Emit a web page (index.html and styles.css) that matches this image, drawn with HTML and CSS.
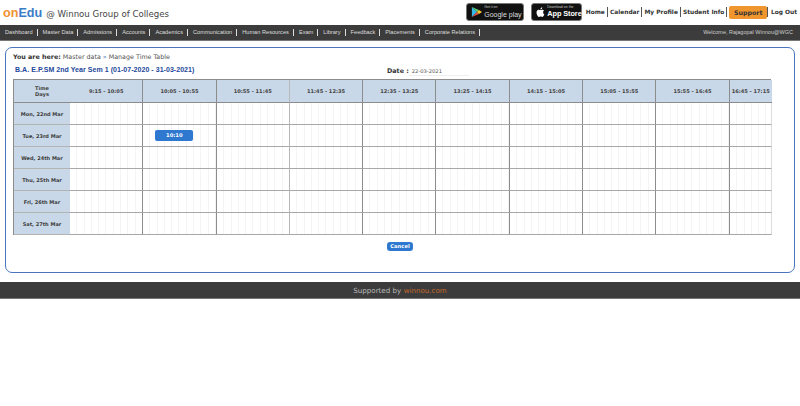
FILE: index.html
```html
<!DOCTYPE html>
<html lang="en">
<head>
<meta charset="utf-8">
<title>onEdu - Manage Time Table</title>
<link rel="stylesheet" href="styles.css">
</head>
<body>
<header class="top">
  <div class="brand"><span class="on">on</span><span class="edu">Edu</span><span class="at">@ Winnou Group of Colleges</span></div>
  <div class="top-right">
    <div class="badge play">
      <svg class="badge-icon" width="11" height="12" viewBox="0 0 13 14"><path d="M1 1v12l6-6z" fill="#35b8e8"/><path d="M1 1l6 6 2.4-2.4z" fill="#5fce7a"/><path d="M1 13l6-6 2.4 2.4z" fill="#e8504a"/><path d="M9.4 4.6L7 7l2.4 2.4L13 7z" fill="#f7c52e"/></svg>
      <div class="badge-text"><span class="small">Get it on</span><span class="big">Google play</span></div>
    </div>
    <div class="badge store">
      <svg class="badge-icon" width="10" height="12" viewBox="0 0 12 14"><path d="M9.700 7.400c0-1.400 1.100-2 1.200-2.100-.7-1-1.700-1.100-2.100-1.100-.9-.1-1.700.5-2.200.5s-1.100-.5-1.900-.5C3.700 4.200 2.800 4.800 2.300 5.600c-1 1.800-.3 4.400.7 5.800.5.700 1.100 1.500 1.800 1.500s1-.5 1.900-.5 1.100.5 1.900.5 1.300-.7 1.800-1.400c.6-.8.800-1.600.8-1.600s-1.500-.6-1.500-2.500zM8.200 3.100c.4-.5.7-1.200.6-1.900-.6 0-1.300.4-1.700.9-.4.4-.7 1.100-.6 1.800.7 0 1.300-.3 1.700-.8z" fill="#fff"/></svg>
      <div class="badge-text"><span class="small">Download on the</span><span class="big strong">App Store</span></div>
    </div>
    <nav class="links">
      <a class="link">Home</a><a class="link">Calendar</a><a class="link">My Profile</a><a class="link">Student Info</a><a class="link support">Support</a><a class="link last">Log Out</a>
    </nav>
  </div>
</header>
<nav class="menu">
  <div class="menu-items">
    <a>Dashboard</a><a>Master Data</a><a>Admissions</a><a>Accounts</a><a>Academics</a><a>Communication</a><a>Human Resources</a><a>Exam</a><a>Library</a><a>Feedback</a><a>Placements</a><a>Corporate Relations</a>
  </div>
  <div class="welcome">Welcome, Rajagopal Winnou@WGC</div>
</nav>
<main class="panel">
  <div class="crumb"><b>You are here:</b> Master data <span class="sep">»</span> Manage Time Table</div>
  <div class="title-row">
    <h1 class="title">B.A. E.P.SM 2nd Year Sem 1 (01-07-2020 - 31-03-2021)</h1>
    <div class="date"><b>Date :</b><span class="date-input">22-03-2021</span></div>
  </div>
  <div class="grid">
    <div class="head corner">Time<br>Days</div>
    <div class="head">9:15 - 10:05</div><div class="head">10:05 - 10:55</div><div class="head">10:55 - 11:45</div><div class="head">11:45 - 12:35</div><div class="head">12:35 - 13:25</div><div class="head">13:25 - 14:15</div><div class="head">14:15 - 15:05</div><div class="head">15:05 - 15:55</div><div class="head">15:55 - 16:45</div><div class="head tight">16:45 - 17:15</div>

    <div class="day">Mon, 22nd Mar</div>
    <div class="cell"></div><div class="cell"></div><div class="cell"></div><div class="cell"></div><div class="cell"></div><div class="cell"></div><div class="cell"></div><div class="cell"></div><div class="cell"></div><div class="cell"></div>

    <div class="day">Tue, 23rd Mar</div>
    <div class="cell"></div><div class="cell"><span class="slot">10:10</span></div><div class="cell"></div><div class="cell"></div><div class="cell"></div><div class="cell"></div><div class="cell"></div><div class="cell"></div><div class="cell"></div><div class="cell"></div>

    <div class="day">Wed, 24th Mar</div>
    <div class="cell"></div><div class="cell"></div><div class="cell"></div><div class="cell"></div><div class="cell"></div><div class="cell"></div><div class="cell"></div><div class="cell"></div><div class="cell"></div><div class="cell"></div>

    <div class="day">Thu, 25th Mar</div>
    <div class="cell"></div><div class="cell"></div><div class="cell"></div><div class="cell"></div><div class="cell"></div><div class="cell"></div><div class="cell"></div><div class="cell"></div><div class="cell"></div><div class="cell"></div>

    <div class="day">Fri, 26th Mar</div>
    <div class="cell"></div><div class="cell"></div><div class="cell"></div><div class="cell"></div><div class="cell"></div><div class="cell"></div><div class="cell"></div><div class="cell"></div><div class="cell"></div><div class="cell"></div>

    <div class="day">Sat, 27th Mar</div>
    <div class="cell"></div><div class="cell"></div><div class="cell"></div><div class="cell"></div><div class="cell"></div><div class="cell"></div><div class="cell"></div><div class="cell"></div><div class="cell"></div><div class="cell"></div>
  </div>
  <div class="actions"><button class="cancel">Cancel</button></div>
</main>
<footer class="foot">Supported by <span class="winnou">winnou.com</span></footer>
</body>
</html>
```
FILE: styles.css
```css
* { box-sizing: border-box; }
html, body { margin: 0; padding: 0; background: #fff; }
body { width: 800px; height: 406px; overflow: hidden; font-family: "DejaVu Sans", sans-serif; color: #333; }

.top { height: 25px; display: flex; justify-content: space-between; align-items: center; padding: 0 0 0 3px; }
.brand { display: flex; align-items: baseline; font-size: 12.6px; font-weight: 700; font-family: "Liberation Sans", sans-serif; }
.on { color: #f0922e; }
.edu { color: #3a7cc6; }
.at { font-family: "DejaVu Sans", sans-serif; font-weight: 400; font-size: 8.6px; color: #444; margin-left: 4px; }
.top-right { display: flex; align-items: center; height: 25px; }
.badge { background: #111; border: 1px solid #777; border-radius: 3px; height: 18px; display: flex; align-items: center; color: #fff; font-family: "Liberation Sans", sans-serif; }
.badge-icon { flex: none; }
.play { width: 58px; margin-right: 7px; padding-left: 4px; gap: 2px; margin-top: -1px; }
.store { width: 51px; margin-right: 1.5px; padding-left: 3px; gap: 2px; margin-top: -2px; }
.badge-text { display: flex; flex-direction: column; line-height: 1; }
.small { font-size: 3.5px; margin-bottom: 1px; color: #ccc; white-space: nowrap; }
.big { font-size: 7px; white-space: nowrap; color: #ddd; }
.strong { font-size: 7.4px; font-weight: 700; color: #fff; letter-spacing: -0.1px; }
.links { display: flex; align-items: center; font-size: 5.9px; font-weight: 700; margin-top: -1px; }
.link { color: #333; padding: 0 2px; border-right: 1px solid #555; line-height: 10px; white-space: nowrap; }
.support { background: #f0962f; border: 0; border-radius: 2px; line-height: 13px; padding: 0 4.5px; margin: 0 0.5px 0 2px; font-size: 6.3px; color: #333; }
.last { border: 0; border-left: 1px solid #555; padding: 0 0 0 2.5px; margin-right: 3px; }

.menu { height: 16px; background: #3c3c3c; border-bottom: 1px solid #777; display: flex; justify-content: space-between; align-items: center; padding: 0 7px 1px 5px; font-family: "Liberation Sans", sans-serif; font-size: 5.65px; color: #ddd; }
.menu-items { display: flex; }
.menu-items a { padding-right: 4px; margin-right: 5px; border-right: 1px solid #ddd; line-height: 7px; white-space: nowrap; }
.welcome { color: #ccc; font-size: 5.5px; }

.panel { margin: 6px 5px 0; width: 790px; height: 226px; border: 1.5px solid #4a75bd; border-radius: 7px; padding: 4px 0 0 7px; }
.crumb { font-size: 6.35px; line-height: 9px; color: #555; }
.crumb b { color: #333; }
.sep { color: #3a6cb4; }
.title-row { display: flex; align-items: center; height: 14px; margin-top: 1px; margin-bottom: 3px; }
.title { margin: 1px 0 0 2px; font: 700 7px/9px "Liberation Sans", sans-serif; color: #23479a; width: 366px; letter-spacing: 0.05px; }
.date { display: flex; align-items: center; font-size: 6.2px; margin-top: 4px; margin-left: 6px; }
.date b { color: #333; font-size: 6.4px; }
.date-input { width: 60px; font-size: 5.2px; color: #555; padding-left: 3px; border-bottom: 1px solid #eee; line-height: 8px; }

.grid { display: grid; grid-template-columns: 56px repeat(9, 73.3px) 42px; grid-template-rows: 23px repeat(6, 22px); width: 758px; border-top: 1px solid #8c8c8c; border-left: 1px solid #8c8c8c; }
.head { background: #c9d8e8; border-right: 1px solid #8c8c8c; border-bottom: 1px solid #8c8c8c; display: flex; align-items: center; justify-content: center; text-align: center; font-size: 5.1px; font-weight: 700; line-height: 6px; color: #444; white-space: nowrap; }
.corner { border-right: 0; }
.tight { border-right: 0; }
.day { background: #c9d8e8; border-bottom: 1px solid #b4b4b4; display: flex; align-items: center; justify-content: center; font-size: 5px; font-weight: 700; color: #3c3c3c; white-space: nowrap; }
.cell { border-right: 1px solid #8c8c8c; border-bottom: 1px solid #a8a8a8; background: repeating-linear-gradient(90deg, #fff 0, #fff 6.3px, #f4f4f4 6.3px, #f4f4f4 7.3px); display: flex; align-items: center; }
.grid > :nth-child(11n+4) { border-right-color: #b8b8b8; }
.cell:nth-child(11n) { border-right: 1px solid #ddd; }
.slot { width: 38px; height: 11px; border-radius: 2px; background: #2f78d0; color: #fff; font-size: 5.2px; font-weight: 700; line-height: 11px; text-align: center; margin-left: 12px; }

.actions { display: flex; justify-content: center; margin-top: 7px; width: 774px; }
.cancel { width: 26px; height: 9px; border: 0; border-radius: 3px; padding: 0; background: #2f78d0; color: #fff; font: 700 5.2px/9px "DejaVu Sans", sans-serif; }

.foot { margin-top: 9px; height: 17px; background: #3c3c3c; border-bottom: 1px solid #777; display: flex; align-items: center; justify-content: center; gap: 2.5px; color: #bbb; font-size: 7.1px; }
.winnou { color: #c8682a; }
```
